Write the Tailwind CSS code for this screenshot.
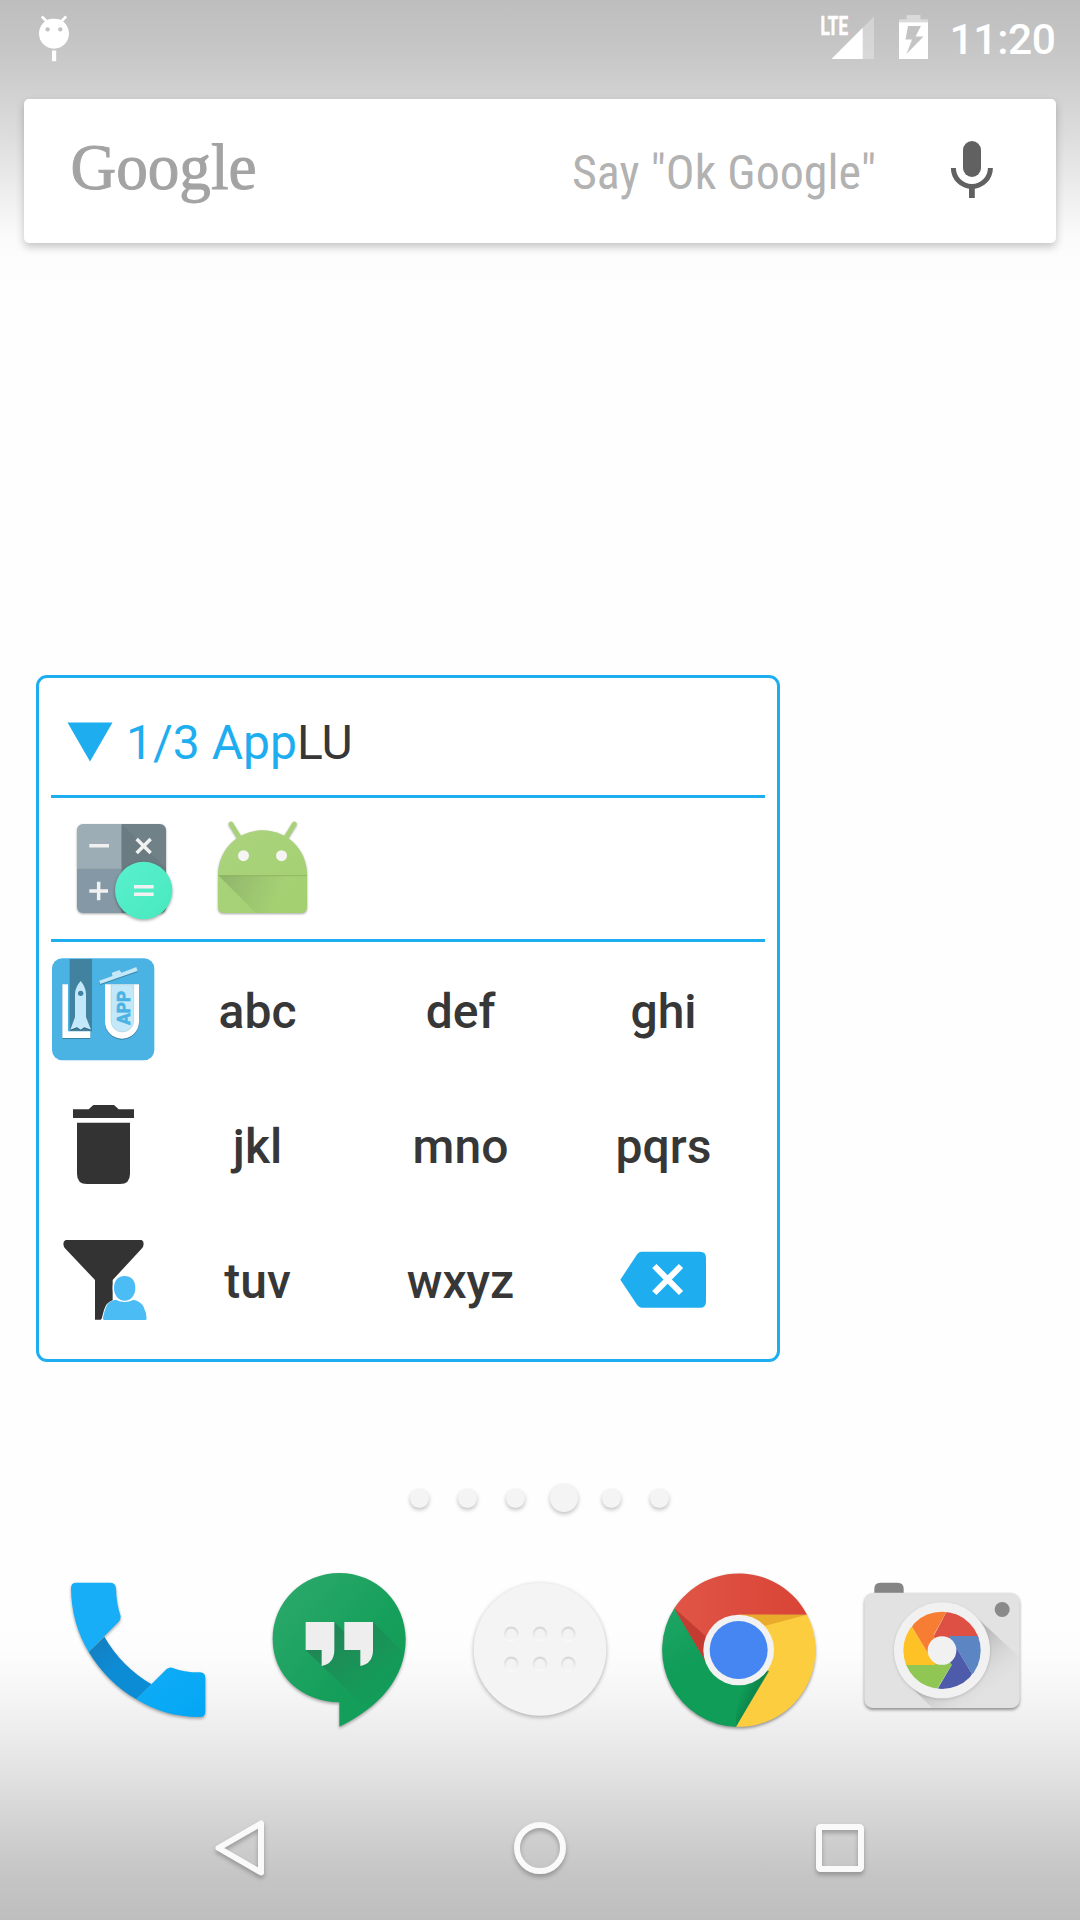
<!DOCTYPE html>
<html lang="en">
<head>
<meta charset="utf-8">
<title>Home screen</title>
<script src="https://cdn.jsdelivr.net/npm/@tailwindcss/browser@4"></script>
</head>
<body class="bg-white">
<div class="relative w-[1080px] h-[1920px] overflow-hidden flex flex-col font-['Roboto',sans-serif] bg-[#fefefe]">
  <div class="absolute inset-x-0 top-0 h-[300px] bg-[linear-gradient(to_bottom,#bebebe_0px,#c4c4c4_40px,#cbcbcb_70px,#d3d3d3_100px,#e1e1e1_150px,#f0f0f0_200px,#fafafa_235px,#fdfdfd_260px,#fefefe_300px)]"></div>
  <div class="absolute inset-x-0 bottom-0 h-[300px] bg-[linear-gradient(to_top,#bebebe_0px,#c5c5c5_45px,#cdcdcd_75px,#d7d7d7_110px,#e0e0e0_140px,#e8e8e8_170px,#f3f3f3_215px,#fafafa_250px,#fdfdfd_270px,#fefefe_300px)]"></div>

  <!-- Status bar -->
  <header class="relative h-[75px] shrink-0 flex justify-between">
    <svg class="ml-[34px] w-10 h-[75px]" viewBox="34 0 40 75" fill="#fff">
      <path fill-rule="evenodd" d="M54 18.700c2.500 0 4.500.3 6.400 1.100C65.800 22.200 69 28 69 33.800c0 8.200-6.700 14.900-15 14.900s-15-6.700-15-14.900c0-5.800 3.200-11.600 8.600-14 1.900-.8 3.900-1.100 6.400-1.100zM47.600 27.200a2.200 2.200 0 1 0 .01 0zM60.300 27.200a2.200 2.200 0 1 0 .01 0z"/>
      <path d="M41.800 16.500l5 5M66.200 16.500l-5 5" stroke="#fff" stroke-width="2.600"/>
      <rect x="52" y="50.500" width="4.200" height="10.700"/>
    </svg>
    <div class="flex">
      <svg class="w-[120px] h-[75px]" viewBox="820 0 120 75">
        <text x="820.500" y="35.300" font-size="25.500" font-weight="700" fill="#fff" stroke="#fff" stroke-width=".6" textLength="27.500" lengthAdjust="spacingAndGlyphs" class="font-['Roboto']">LTE</text>
        <path d="M831.500 59L874 16.500V59z" fill="#fff" fill-opacity=".3"/>
        <path d="M831.500 59L862.700 27.800V59z" fill="#fff"/>
        <path d="M906.500 15h14v4.200h7.500V22.300h-29v-3.100h7.500z" fill="#fff" fill-opacity=".4"/>
        <path fill-rule="evenodd" fill="#fff" d="M899 22.300h29V59h-29zM908 26l-2.500 13.500h6.500L906.500 54 923.500 36.500h-8l5.500-10.500z"/>
      </svg>
      <svg class="w-[140px] h-[75px]" viewBox="940 0 140 75">
        <text x="949.500" y="54" font-size="42.500" font-weight="500" fill="#fff" textLength="106.500" class="font-['Roboto']">11:20</text>
      </svg>
    </div>
  </header>

  <!-- Search bar -->
  <div class="relative mt-6 mx-6 h-36 shrink-0 rounded-[5px] bg-white shadow-[0_4px_8px_rgba(0,0,0,0.22)] flex items-center justify-between">
    <svg class="w-[220px] h-36 ml-[40px]" viewBox="64 99 220 144">
      <text x="70.500" y="189" font-size="65.500" fill="#a3a3a3" stroke="#a3a3a3" stroke-width="1" textLength="186" lengthAdjust="spacingAndGlyphs" class="font-['Liberation_Serif']">Google</text>
    </svg>
    <svg class="w-[492px] h-36" viewBox="564 99 492 144">
      <text x="572" y="189" font-size="48" fill="#b2b2b2" textLength="304" lengthAdjust="spacingAndGlyphs" class="font-['Roboto_Condensed','Roboto']">Say "Ok Google"</text>
      <rect x="963" y="141" width="18" height="36" rx="9" fill="#616161"/>
      <path d="M953.400 168a18.500 18.500 0 0 0 37 0" fill="none" stroke="#616161" stroke-width="5"/>
      <path d="M969 187h5.800v11H969z" fill="#616161"/>
    </svg>
  </div>

  <!-- App launcher widget -->
  <main class="relative mt-[432px] ml-9 w-[744px] h-[687px] shrink-0 rounded-[11px] border-3 border-[#1eaef0] bg-white px-3 flex flex-col text-[48px] text-[#373737]">
    <div class="h-[120px] border-b-3 border-[#1eaef0] flex items-center pl-4">
      <svg class="w-[46px] h-[40px] mt-[11px]" viewBox="0 0 46 40"><path d="M.5 .5h45L23 39.500z" fill="#1eaef0"/></svg>
      <p class="ml-[13px] mt-[12px] leading-none whitespace-pre"><span class="text-[#1eaef0]">1/3 App</span>LU</p>
    </div>
    <div class="h-36 border-b-3 border-[#1eaef0]">
      <svg class="w-[300px] h-[141px]" viewBox="63 414 900 423">
        <defs>
          <linearGradient id="mint" x2="1" y2="1"><stop stop-color="#5af0cf"/><stop offset="1" stop-color="#47e9be"/></linearGradient>
          <linearGradient id="lime" x2="1" y2="1"><stop stop-color="#abd47e"/><stop offset="1" stop-color="#a3cf6f"/></linearGradient>
          <linearGradient id="fold" gradientUnits="userSpaceOnUse" x1="566" y1="647" x2="740" y2="720"><stop stop-color="#4a6a45" stop-opacity=".28"/><stop offset="1" stop-color="#4a6a45" stop-opacity="0"/></linearGradient>
          <clipPath id="calc"><rect x="141" y="492" width="267" height="267" rx="18"/></clipPath>
        </defs>
        <g class="drop-shadow-[0_3px_3px_rgba(0,0,0,0.35)]">
          <g clip-path="url(#calc)">
            <path d="M141 492h134v134H141z" fill="#9dadb5"/><path d="M141 626h134v133H141z" fill="#8499a5"/>
            <path d="M275 492h133v267H275z" fill="#718188"/><path d="M275 492l133 133v134H275z" fill="#6b7b82"/>
          </g>
        </g>
        <circle cx="341" cy="691.500" r="86" fill="url(#mint)" class="drop-shadow-[0_4px_4px_rgba(0,0,0,0.35)]"/>
        <path d="M178 557.500h59M178 693h56M206 665v56M312 680h59M312 703h59M320 537l42 42M362 537l-42 42" stroke="#f1f1f1" stroke-width="10.500" fill="none"/>
        <g class="drop-shadow-[0_3px_3px_rgba(0,0,0,0.35)]">
          <path d="M603 492l26 42M793 492l-26 42" stroke="#a8d277" stroke-width="14" stroke-linecap="round"/>
          <path d="M564 645c0-76 59-134 133.500-134S831 569 831 645v96q0 18-18 18H582q-18 0-18-18z" fill="url(#lime)"/>
        </g>
        <path d="M564 645h267v4H568z" fill="#95bd66"/>
        <path d="M566 647h265v50l-61 62h-92z" fill="url(#fold)"/>
        <circle cx="640.500" cy="587" r="16.500" fill="#f4f4f4"/><circle cx="754.500" cy="587" r="16.500" fill="#f4f4f4"/>
      </svg>
    </div>

    <div class="grid grid-cols-[105px_203px_203px_203px] auto-rows-[135px] items-center justify-items-center text-center font-medium leading-none">
      <svg class="w-[105px] h-[135px]" viewBox="63 36 315 405">
        <rect x="66" y="85" width="307" height="306" rx="31" fill="#4ab3e4"/>
        <path d="M119 87h67v217h-67z" fill="#4082a0"/>
        <path d="M97 163h17v141h67v20H97z" fill="#fff" class="drop-shadow-[0_2px_2px_rgba(0,0,0,0.4)]"/>
        <path d="M152 153q16 18 16 40v68l15 38-20-7-11 7-11-7-20 7 14-38v-68q0-22 17-40z" fill="#c3e8f9" class="drop-shadow-[0_2px_2px_rgba(0,0,0,0.4)]"/>
        <circle cx="152" cy="190" r="8" fill="#4082a0"/>
        <path d="M225 163h102v112a51 51 0 0 1-102 0z" fill="#fff" class="drop-shadow-[0_2px_2px_rgba(0,0,0,0.4)]"/>
        <path d="M243 164h68v108a34 34 0 0 1-68 0z" fill="#c3e8f9" stroke="#a5c4d2" stroke-width="1.500"/>
        <path d="M207 152l40-14-2-10 24-8 5 8 45-17 4 12-112 39z" fill="#c3e8f9" class="drop-shadow-[0_2px_2px_rgba(0,0,0,0.4)]"/>
        <text transform="translate(299 284) rotate(-90)" font-size="53" font-weight="700" fill="#4ab3e4" textLength="101" lengthAdjust="spacingAndGlyphs" stroke="#4ab3e4" stroke-width="2" class="font-['Roboto']">APP</text>
      </svg>
      <span class="pt-1">abc</span><span class="pt-1">def</span><span class="pt-1">ghi</span>

      <svg class="w-[105px] h-[135px]" viewBox="63 441 315 405" fill="#333">
        <path d="M129 538h47l14-13h62l14 13h46v26H129zM141 578h159v154q0 30-30 30h-99q-30 0-30-30z"/>
      </svg>
      <span class="pt-1">jkl</span><span class="pt-1">mno</span><span class="pt-1">pqrs</span>

      <svg class="w-[105px] h-[135px]" viewBox="63 846 315 405">
        <path d="M107 930h228q6 3 6 12 0 8-7 15l-86 93v90l-36 29h-17V1050l-88-93q-7-7-7-15 0-9 7-12z" fill="#333"/>
        <path d="M284 1034c21 0 36 14 36 40 0 16-5 27-14 34l10 1q25 8 30 27l7 38H213l9-34q6-24 30-31h10q-14-9-14-35c0-26 15-40 36-40z" fill="#fff"/>
        <path d="M284 1038c19 0 32 12 32 36 0 23-14 38-32 38s-32-15-32-38c0-24 13-36 32-36z" fill="#4bbcf4"/>
        <path d="M257 1109q27 14 54 0 24 7 30 22 9 18 9 36-1 3-5 3H223q-5 0-4-7 4-22 12-38 7-12 26-16z" fill="#4bbcf4"/>
      </svg>
      <span class="pt-1">tuv</span><span class="pt-1">wxyz</span>
      <svg class="w-[203px] h-[135px]" viewBox="726 846 609 405">
        <path d="M964 965h176q18 0 18 18v132q0 18-18 18H964q-6 0-12-7l-51-77 51-77q6-7 12-7z" fill="#1eaef0"/>
        <path d="M1003 1008l80 81M1083 1008l-80 81" stroke="#fff" stroke-width="18"/>
      </svg>
    </div>
  </main>

  <!-- Page indicator -->
  <div class="relative mt-[116px] h-10 mr-px shrink-0 flex items-center justify-center gap-[29px]">
    <i class="size-[19px] rounded-full bg-[#f4f4f4] shadow-[0_2px_4px_rgba(0,0,0,0.25)]"></i>
    <i class="size-[19px] rounded-full bg-[#f4f4f4] shadow-[0_2px_4px_rgba(0,0,0,0.25)]"></i>
    <i class="size-[19px] rounded-full bg-[#f4f4f4] shadow-[0_2px_4px_rgba(0,0,0,0.25)]"></i>
    <i class="size-7 -mx-[4.5px] rounded-full bg-[#f4f4f4] shadow-[0_2px_4px_rgba(0,0,0,0.25)]"></i>
    <i class="size-[19px] rounded-full bg-[#f4f4f4] shadow-[0_2px_4px_rgba(0,0,0,0.25)]"></i>
    <i class="size-[19px] rounded-full bg-[#f4f4f4] shadow-[0_2px_4px_rgba(0,0,0,0.25)]"></i>
  </div>

  <!-- Dock -->
  <nav class="relative mt-8 mx-10 h-[200px] shrink-0 grid grid-cols-5">
    <svg class="size-[200px]" viewBox="0 0 600 600">
      <defs>
        <linearGradient id="blue" x2="1" y2="1"><stop stop-color="#11adf7"/><stop offset="1" stop-color="#03a6f4"/></linearGradient>
        <linearGradient id="neck" x1=".2" y1="0" x2=".5" y2=".5"><stop stop-color="#147fc0"/><stop offset="1" stop-color="#0d8cd6"/></linearGradient>
      </defs>
      <g class="drop-shadow-[0_5px_4px_rgba(0,0,0,0.35)]">
        <path d="M193 260Q245 350 335 403L289 448Q202 398 146 306z" fill="url(#neck)"/>
        <path d="M109 98h101q17 0 18 17 1 46 14 84 0 7-4 14L146 306Q94 220 93 114q0-16 16-16z" fill="#17aef7"/>
        <path d="M289 448l91-91q8-6 16-4 36 14 84 14 16 1 16 17v101q0 16-16 16-104 1-191-53z" fill="url(#blue)"/>
      </g>
    </svg>
    <svg class="size-[200px]" viewBox="600 0 600 600">
      <defs>
        <linearGradient id="green" x2="1" y2="1"><stop stop-color="#2eaa6c"/><stop offset=".6" stop-color="#159f5b"/><stop offset="1" stop-color="#0f9b57"/></linearGradient>
        <linearGradient id="gshade" gradientUnits="userSpaceOnUse" x1="860" y1="270" x2="980" y2="410"><stop stop-color="#208052" stop-opacity=".8"/><stop offset="1" stop-color="#208052" stop-opacity=".1"/></linearGradient>
        <clipPath id="bubble"><path d="M898 69c110 0 199 86 199 199 0 116-80 205-199 262V457c-110 0-200-78-200-189C698 155 788 69 898 69z"/></clipPath>
      </defs>
      <path d="M898 69c110 0 199 86 199 199 0 116-80 205-199 262V457c-110 0-200-78-200-189C698 155 788 69 898 69z" fill="url(#green)" class="drop-shadow-[0_5px_4px_rgba(0,0,0,0.35)]"/>
      <path clip-path="url(#bubble)" d="M883 216l29 29 87-29 120 120-150 130L797 300h50z" fill="url(#gshade)"/>
      <path d="M797 216h86v85c0 27-15 44-38 47v-48h-48zM913 216h86v85c0 27-15 44-38 47v-48h-48z" fill="#eee"/>
    </svg>
    <svg class="size-[200px]" viewBox="0 0 600 600">
      <defs>
        <linearGradient id="dent" x2="0" y2="1"><stop stop-color="#d8d8d8"/><stop offset="1" stop-color="#f8f8f8"/></linearGradient>
      </defs>
      <circle cx="300" cy="298" r="199" fill="#f4f4f4" class="drop-shadow-[0_4px_6px_rgba(0,0,0,0.3)]"/>
      <g fill="#f3f3f3" stroke="url(#dent)" stroke-width="7">
        <circle cx="214" cy="252" r="19"/><circle cx="300" cy="252" r="19"/><circle cx="385" cy="252" r="19"/>
        <circle cx="214" cy="342" r="19"/><circle cx="300" cy="342" r="19"/><circle cx="385" cy="342" r="19"/>
      </g>
    </svg>
    <svg class="size-[200px]" viewBox="600 0 600 600">
      <defs>
        <linearGradient id="red" x2="1"><stop stop-color="#e05547"/><stop offset="1" stop-color="#d94435"/></linearGradient>
        <linearGradient id="gshade2" gradientUnits="userSpaceOnUse" x1="900" y1="430" x2="945" y2="450"><stop stop-color="#0b7a45" stop-opacity="0"/><stop offset="1" stop-color="#0b7a45" stop-opacity=".8"/></linearGradient>
        <linearGradient id="leaf" x2=".5" y2="1"><stop stop-color="#20a566"/><stop offset=".5" stop-color="#0f9d58"/></linearGradient>
      </defs>
      <g class="drop-shadow-[0_5px_5px_rgba(0,0,0,0.4)]">
        <path d="M1101 194A231 231 0 0 1 888 530.500L897 299V190z" fill="#fdcd40"/>
        <path d="M703 175A231 231 0 0 0 888 530.500L985 362 897 300z" fill="url(#leaf)"/>
        <path d="M703 175A231 231 0 0 1 1101 194H897L800 340z" fill="url(#red)"/>
      </g>
      <path d="M703 175l97 165 10-70z" fill="#b9342b" fill-opacity=".75"/>
      <path d="M888 530.500L988 362l-80 30-20 100z" fill="url(#gshade2)"/>
      <path d="M897 194h204l-125 33z" fill="#e8ab2c"/>
      <circle cx="896" cy="300" r="106" fill="#f2f2f2"/>
      <circle cx="896" cy="300" r="87" fill="#4586f3"/>
    </svg>
    <svg class="size-[200px]" viewBox="0 0 600 600">
      <defs>
        <linearGradient id="cshade" gradientUnits="userSpaceOnUse" x1="340" y1="330" x2="430" y2="440"><stop stop-color="#bcbcbc"/><stop offset="1" stop-color="#dfdfdf" stop-opacity=".2"/></linearGradient>
        <clipPath id="iris"><circle cx="306" cy="301" r="116"/></clipPath>
      </defs>
      <path d="M103 140v-24q0-18 18-18h52q18 0 18 18v24z" fill="#858585"/>
      <rect x="73" y="128" width="466" height="346" rx="26" fill="#e2e2e2" class="drop-shadow-[0_6px_4px_rgba(0,0,0,0.4)]"/>
      <path d="M408 200l131 122v125q0 26-26 26H276L205 402z" fill="url(#cshade)"/>
      <circle cx="486.500" cy="178.500" r="22.500" fill="#8a8a8a"/>
      <circle cx="306" cy="301" r="144" fill="#f1f1f1" class="drop-shadow-[0_3px_4px_rgba(0,0,0,0.15)]"/>
      <g clip-path="url(#iris)">
        <path d="M306 301L281 258 325 175H440V258z" fill="#df5044"/>
        <path d="M306 301L330 258H440V400L396 372 350 295z" fill="#5c85c4"/>
        <path d="M306 301L350 295 396 372 370 430H285L335 345z" fill="#4e5bab"/>
        <path d="M306 301L335 345 291 417H180V345z" fill="#90c754"/>
        <path d="M306 301L284 345H180V240L216 230 263 308z" fill="#fec226"/>
        <path d="M306 301L263 308 216 230 240 175H325L281 255z" fill="#f67d31"/>
      </g>
      <circle cx="306" cy="301.500" r="43" fill="#f1f1f1"/>
    </svg>
  </nav>

  <!-- Navigation bar -->
  <footer class="relative mt-[26px] h-36 shrink-0">
    <svg class="w-[1080px] h-36" viewBox="0 1776 1080 144" fill="none" stroke="#fafafa" stroke-width="6">
      <g class="drop-shadow-[0_3px_2px_rgba(0,0,0,0.25)]">
        <path d="M261 1823.500V1872.500L218.500 1848z" stroke-linejoin="round"/>
        <circle cx="540" cy="1848" r="23"/>
        <rect x="819" y="1827" width="42" height="42" rx="1.500"/>
      </g>
    </svg>
  </footer>
</div>
</body>
</html>
